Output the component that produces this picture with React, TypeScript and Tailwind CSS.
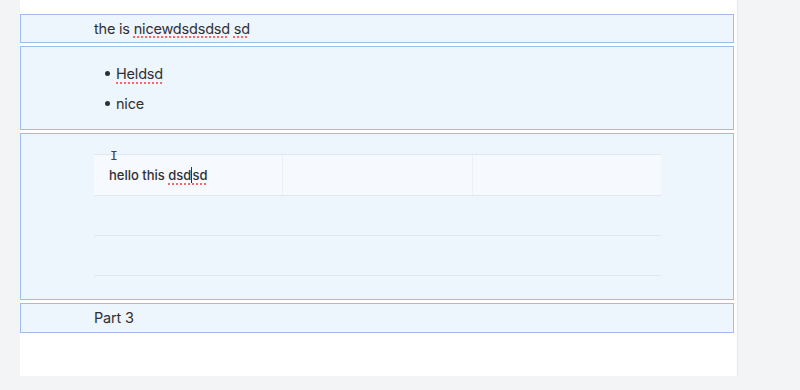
import { useState } from "react";

const spell = "underline decoration-dotted decoration-red-400 decoration-[1.5px] underline-offset-[3px]";

function Block({ children, className = "" }: { children: React.ReactNode; className?: string }) {
  return (
    <div className={`border-[1.5px] border-[#9fbdeb] bg-[#edf5fd] ${className}`}>{children}</div>
  );
}

export default function App() {
  const [rows] = useState([["hello this dsdsd", "", ""], ["", "", ""], ["", "", ""]]);

  return (
    <div className="flex h-[390px] w-[800px] bg-[#f3f4f5] font-['Inter',sans-serif] text-[14.5px] tracking-[-0.2px] text-[#2f3033]">
      <div className="ml-5 flex h-[376px] w-[718px] flex-col gap-[3px] border-r border-[#e6e7e8] bg-white pr-[3px] pt-[14px]">
        <Block className="flex h-[29px] items-center pl-[73px]">
          <span>
            the is <span className={spell}>nicewdsdsdsd</span> <span className={spell}>sd</span>
          </span>
        </Block>

        <Block className="h-[84px] pl-[84px] pt-[17px]">
          <ul className="flex flex-col gap-[11px]">
            <li className="flex items-center gap-[6px] leading-[19px]">
              <span className="h-[5px] w-[5px] rounded-full bg-[#2f3033]" />
              <span className={spell}>Heldsd</span>
            </li>
            <li className="flex items-center gap-[6px] leading-[19px]">
              <span className="h-[5px] w-[5px] rounded-full bg-[#2f3033]" />
              <span>nice</span>
            </li>
          </ul>
        </Block>

        <Block className="relative h-[167px] pl-[73px] pt-[20px]">
          <span className="absolute left-[89px] top-[15px] text-[13px] leading-none text-[#444] font-['DejaVu_Sans_Mono',monospace]">I</span>
          <div className="w-[567px] border-t border-[#e2e7ee]">
            {rows.map((r, i) => (
              <div
                key={i}
                className={`grid grid-cols-[188px_190px_189px] border-b border-[#e2e7ee] ${i === 0 ? "h-[41px] bg-[#f6f9fd]" : "h-[40px]"}`}
              >
                {r.map((c, j) => (
                  <div
                    key={j}
                    className={`flex items-center px-[15px] text-[13px] font-medium tracking-normal ${j > 0 && i === 0 ? "border-l border-[#eef0f3]" : ""}`}
                  >
                    {c && (
                      <span>
                        hello this <span className={spell}>dsd</span>
                        <span className="inline-block h-[16px] w-px translate-y-[3px] bg-[#333]" />
                        <span className={spell}>sd</span>
                      </span>
                    )}
                  </div>
                ))}
              </div>
            ))}
          </div>
        </Block>

        <Block className="flex h-[30px] items-center pl-[73px]">
          <span>Part 3</span>
        </Block>
      </div>
    </div>
  );
}
